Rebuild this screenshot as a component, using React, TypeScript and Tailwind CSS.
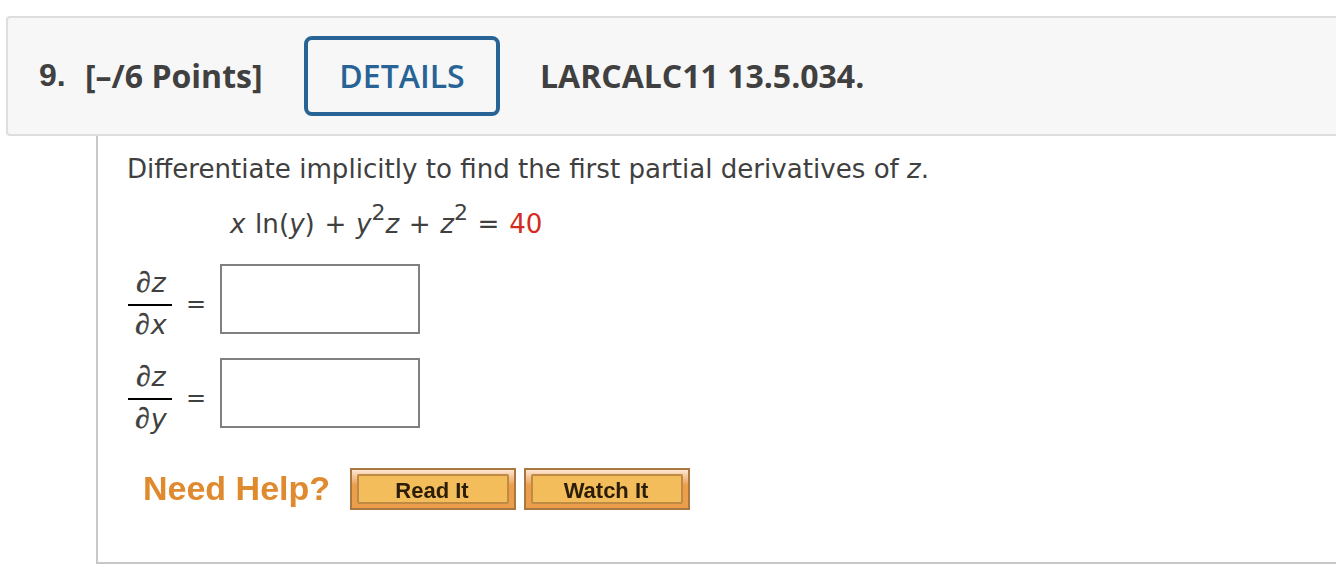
import React from 'react'

const Fraction = ({ top, bottom }: { top: string; bottom: string }) => {
    return (
        <div className="w-11 text-center text-[27px] leading-[36px]">
            <div className="h-[42px] border-b-2 border-black pl-0.5">
                <span className="mr-px font-['Liberation_Serif'] text-[29px] [-webkit-text-stroke:0.6px_#404040]">∂</span>
                <i>{top}</i>
            </div>
            <div className="h-10 pl-0.5">
                <span className="mr-px font-['Liberation_Serif'] text-[29px] [-webkit-text-stroke:0.6px_#404040]">∂</span>
                <i>{bottom}</i>
            </div>
        </div>
    )
}

const Partial = ({ by }: { by: string }) => {
    return (
        <div className="flex h-[94px] items-start">
            <Fraction top="z" bottom={by} />
            <span className="mt-[22px] w-12 pl-[14px] text-[24px] leading-[36px]">=</span>
            <input
                type="text"
                aria-label={`Partial derivative of z with respect to ${by}`}
                className="h-[70px] w-[200px] border-2 border-[#808080] bg-white px-3 outline-none"
            />
        </div>
    )
}

const HelpButton = ({ label }: { label: string }) => {
    return (
        <button className="h-[42px] w-[166px] border-2 border-[#a87840] bg-linear-to-b from-[#fbe6d2] via-[#eb9f4c] via-40% to-[#eb9f4c] px-[5px] py-1 font-['Liberation_Sans'] text-[22px] font-bold text-[#2b1d08]">
            <span className="flex h-full items-center justify-center rounded-[2px] border-2 border-[#bf8b44] bg-[#f3bd5c] whitespace-nowrap">
                <span className="relative top-px -left-px blur-[0.4px]">{label}</span>
            </span>
        </button>
    )
}

const App = () => {
    return (
        <div className="h-[568px] w-full overflow-hidden bg-white pt-4 pl-1.5 font-['DejaVu_Sans',sans-serif] text-[#404040]">
            <header className="flex h-[120px] items-center rounded-l-[4px] border-2 border-r-0 border-[#dedede] bg-[#f7f7f7] pl-[31px] font-['Open_Sans'] text-[32px] font-bold whitespace-nowrap">
                <span className="w-[46px] pb-[3px] font-['Liberation_Sans']">9.</span>
                <span className="w-[219px]">[–/6 Points]</span>
                <button className="h-20 w-[196px] rounded-lg border-4 border-[#286396] font-semibold text-[#286396]">
                    DETAILS
                </button>
                <span className="ml-10">LARCALC11 13.5.034.</span>
            </header>

            <main className="ml-[90px] h-[428px] border-b-2 border-l-2 border-[#c8c8c8] pl-[30px]">
                <p className="-ml-px h-[60px] pt-[14px] text-[26.1px] leading-[38px] whitespace-nowrap">
                    Differentiate implicitly to find the first partial derivatives of <i>z</i>.
                </p>
                <p className="h-[68px] pt-[9px] pl-[102px] text-[26.15px] leading-[38px] [word-spacing:1.3px] whitespace-nowrap">
                    <i>x</i> ln(<i>y</i>) + <i>y</i>
                    <sup className="-top-[0.6em] text-[22px]">2</sup>
                    <i>z</i> + <i>z</i>
                    <sup className="-top-[0.6em] text-[22px]">2</sup> ={' '}
                    <span className="text-[#d42a20]">40</span>
                </p>

                <Partial by="x" />
                <Partial by="y" />

                <div className="mt-4 flex h-[42px] items-center gap-2 pl-[15px]">
                    <span className="w-[199px] pb-0.5 font-['Liberation_Sans'] text-[34px] font-bold whitespace-nowrap text-[#e08a30] blur-[0.4px]">
                        Need Help?
                    </span>
                    <HelpButton label="Read It" />
                    <HelpButton label="Watch It" />
                </div>
            </main>
        </div>
    )
}

export default App
